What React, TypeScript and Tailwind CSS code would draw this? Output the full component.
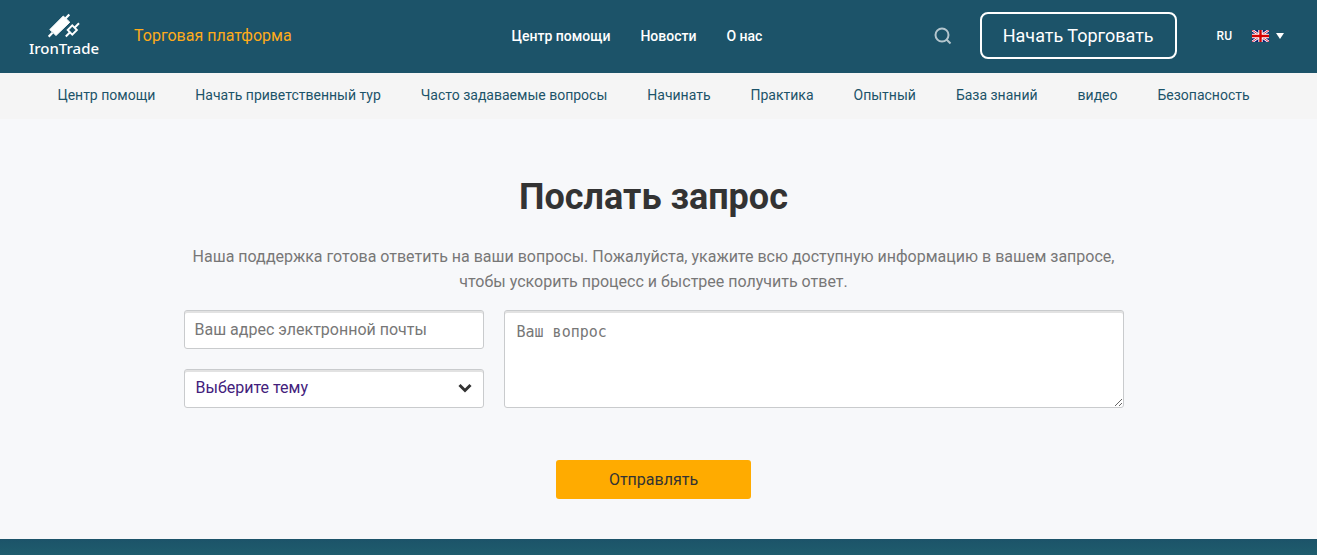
import { useState } from 'react';
import type { FormEvent } from 'react';

const mainLinks = ['Центр помощи', 'Новости', 'О нас'];

const helpLinks = [
    'Центр помощи',
    'Начать приветственный тур',
    'Часто задаваемые вопросы',
    'Начинать',
    'Практика',
    'Опытный',
    'База знаний',
    'видео',
    'Безопасность',
];

const topics = ['Счёт', 'Платежи', 'Торговля'];

function Logo() {
    return (
        <a href="#" className="flex w-18 flex-col items-center text-white">
            <svg width="32" height="25" viewBox="0 0 32 25" fill="none" stroke="currentColor" aria-hidden="true">
                <path
                    d="M15.3 3 21.8 9.2 8 22.5 1.8 16.6Z"
                    fill="currentColor"
                    strokeWidth="1"
                    strokeLinejoin="round"
                />
                <path d="M17.5 5.5 21.3 1.5M4.5 19.8 0.7 23.6" strokeWidth="2.2" />
                <path d="M24.3 12.4 28.9 17 24.3 21.6 19.7 17Z" strokeWidth="1.9" />
                <path d="M26.8 14.5 31 10.3M21.8 19.5 17.8 23.5" strokeWidth="2" />
            </svg>
            <span className="font-['Noto_Sans',sans-serif] text-[15px] leading-5 font-medium">IronTrade</span>
        </a>
    );
}

function Flag() {
    return (
        <svg width="17" height="12" viewBox="0 0 17 12" aria-hidden="true">
            <rect width="17" height="12" fill="#0b1c70" />
            <path d="M0 0 17 12M17 0 0 12" stroke="#fff" strokeWidth="2.6" />
            <path d="M0 0 17 12M17 0 0 12" stroke="#d8102f" strokeWidth="0.9" />
            <path d="M8.5 0V12M0 6H17" stroke="#fff" strokeWidth="4.4" />
            <path d="M8.5 0V12M0 6H17" stroke="#d40000" strokeWidth="2.4" />
        </svg>
    );
}

function Header() {
    return (
        <header className="flex h-[73px] items-center bg-[#1c5369] pr-[33px] pb-0.5 pl-7 text-white">
            <Logo />
            <a href="#" className="ml-[34px] text-base leading-6 text-[#ffab1a]">
                Торговая платформа
            </a>
            <nav className="ml-[220px] flex gap-[30px] text-sm leading-5 font-medium">
                {mainLinks.map((link) => (
                    <a key={link} href="#">{link}</a>
                ))}
            </nav>
            <div className="ml-auto flex items-center">
                <button type="button" aria-label="Поиск" className="mr-7 text-[#b4c6ce]">
                    <svg width="18" height="18" viewBox="0 0 18 18" fill="none" stroke="currentColor" strokeWidth="2">
                        <circle cx="8" cy="8" r="6.5" />
                        <path d="m12.5 12.5 4 4" />
                    </svg>
                </button>
                <a
                    href="#"
                    className="flex h-[47px] items-center rounded-lg border-2 border-white px-[21px] text-lg"
                >
                    Начать Торговать
                </a>
                <button type="button" className="ml-10 flex items-center text-xs font-medium">
                    <span>RU</span>
                    <span className="mr-[7px] ml-5"><Flag /></span>
                    <svg width="8" height="6" viewBox="0 0 8 6" fill="currentColor" aria-hidden="true">
                        <path d="M0 0H8L4 6Z" />
                    </svg>
                </button>
            </div>
        </header>
    );
}

export default function App() {
    const [email, setEmail] = useState('');
    const [topic, setTopic] = useState('');
    const [question, setQuestion] = useState('');

    const handleSubmit = (e: FormEvent) => {
        e.preventDefault();
    };

    const field =
        'w-full rounded-[3px] border border-[#c9cbcd] bg-white shadow-[inset_0_2px_0_#e2e2e2] focus:outline-none';

    return (
        <div className="min-h-screen bg-[#f7f8fa] font-[Roboto,sans-serif]">
            <Header />

            <nav className="flex h-[46px] justify-center gap-10 bg-[#f5f5f5] pt-3 pr-2.5 text-sm leading-5 whitespace-nowrap text-[#1c5369]">
                {helpLinks.map((link) => (
                    <a key={link} href="#">{link}</a>
                ))}
            </nav>

            <main className="pt-[54px] pr-2.5 pb-10">
                <form onSubmit={handleSubmit} className="mx-auto max-w-[940px]">
                    <h1 className="text-center text-4xl leading-12 font-bold text-[#333]">Послать запрос</h1>
                    <p className="mt-[23px] text-center text-base leading-[25px] text-[#777]">
                        Наша поддержка готова ответить на ваши вопросы. Пожалуйста, укажите всю доступную информацию в
                        вашем запросе, чтобы ускорить процесс и быстрее получить ответ.
                    </p>

                    <div className="mt-4 flex gap-5">
                        <div className="flex w-[300px] flex-col gap-5">
                            <input
                                type="email"
                                aria-label="Ваш адрес электронной почты"
                                placeholder="Ваш адрес электронной почты"
                                value={email}
                                onChange={(e) => setEmail(e.target.value)}
                                className={`${field} h-[39px] px-2.5 text-base placeholder:text-[#777]`}
                            />
                            <div className="relative">
                                <select
                                    aria-label="Выберите тему"
                                    value={topic}
                                    onChange={(e) => setTopic(e.target.value)}
                                    className={`${field} block h-[39px] appearance-none px-[11px] pb-0.5 text-base text-[#43217c]`}
                                >
                                    <option value="">Выберите тему</option>
                                    {topics.map((t) => (
                                        <option key={t}>{t}</option>
                                    ))}
                                </select>
                                <svg
                                    className="pointer-events-none absolute top-3.5 right-3 text-[#333]"
                                    width="14"
                                    height="10"
                                    viewBox="0 0 14 10"
                                    fill="none"
                                    stroke="currentColor"
                                    strokeWidth="3"
                                    aria-hidden="true"
                                >
                                    <path d="M1.5 2 7 7.5 12.5 2" />
                                </svg>
                            </div>
                        </div>
                        <textarea
                            aria-label="Ваш вопрос"
                            placeholder="Ваш вопрос"
                            value={question}
                            onChange={(e) => setQuestion(e.target.value)}
                            className={`${field} h-[98px] flex-1 px-3 py-[11px] font-['DejaVu_Sans_Mono',monospace] text-[15px] leading-5 placeholder:text-[#777]`}
                        />
                    </div>

                    <button
                        type="submit"
                        className="mx-auto mt-[52px] block h-[39px] w-[195px] rounded-[3px] bg-[#ffab00] text-base text-[#333]"
                    >
                        Отправлять
                    </button>
                </form>
            </main>

            <footer className="h-4 bg-linear-to-b from-[#1c5369] to-[#1f5d6d]" />
        </div>
    );
}
